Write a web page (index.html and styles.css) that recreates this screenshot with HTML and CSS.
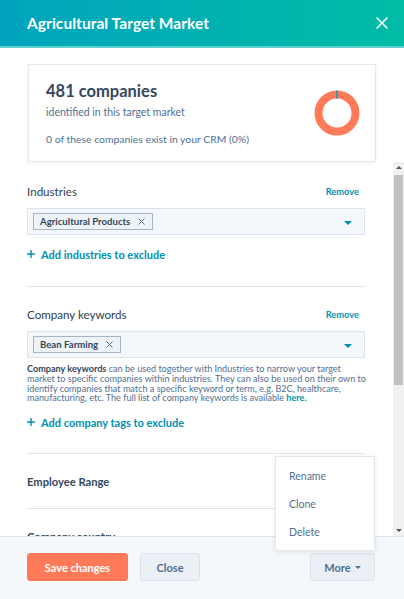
FILE: index.html
```html
<!DOCTYPE html>
<html lang="en">
<head>
<meta charset="utf-8">
<title>Agricultural Target Market</title>
<link rel="stylesheet" href="styles.css">
</head>
<body>
<div class="panel">
  <header class="header">
    <h1 class="title">Agricultural Target Market</h1>
    <button class="close-x" aria-label="Close">
      <svg width="12" height="12" viewBox="0 0 12 12"><path d="M1 1L11 11M11 1L1 11" stroke="#fff" stroke-width="1.6" stroke-linecap="round"/></svg>
    </button>
  </header>

  <div class="summary">
    <div class="card">
      <div class="card-text">
        <div class="count">481 companies</div>
        <div class="sub">identified in this target market</div>
        <div class="crm">0 of these companies exist in your CRM (0%)</div>
      </div>
      <svg class="donut" width="46" height="46" viewBox="0 0 46 46">
        <circle cx="23" cy="23" r="18.5" fill="none" stroke="#ff7a59" stroke-width="8"/>
        <rect x="22.2" y="0.5" width="1.6" height="8" fill="#00a4bd"/>
      </svg>
    </div>
  </div>

  <div class="scroll">
    <div class="scroll-inner">
      <section class="section first">
        <div class="section-head">
          <span class="label">Industries</span>
          <a class="remove">Remove</a>
        </div>
        <div class="select">
          <span class="tag">Agricultural Products <svg class="tag-x" width="7" height="7" viewBox="0 0 7 7"><path d="M0.5 0.5L6.5 6.5M6.5 0.5L0.5 6.5" stroke="#516f90" stroke-width="1"/></svg></span>
          <span class="caret"></span>
        </div>
        <a class="add-link"><span class="plus"><svg width="8" height="8" viewBox="0 0 8 8"><path d="M4 0V8M0 4H8" stroke="#0091ae" stroke-width="1.4"/></svg></span>Add industries to exclude</a>
      </section>

      <section class="section">
        <div class="section-head">
          <span class="label">Company keywords</span>
          <a class="remove">Remove</a>
        </div>
        <div class="select">
          <span class="tag">Bean Farming <svg class="tag-x" width="7" height="7" viewBox="0 0 7 7"><path d="M0.5 0.5L6.5 6.5M6.5 0.5L0.5 6.5" stroke="#516f90" stroke-width="1"/></svg></span>
          <span class="caret"></span>
        </div>
        <p class="help"><strong>Company keywords</strong> can be used together with Industries to narrow your target<br>market to specific companies within industries. They can also be used on their own to<br>identify companies that match a specific keyword or term, e.g. B2C, healthcare,<br>manufacturing, etc. The full list of company keywords is available <a class="here">here.</a></p>
        <a class="add-link"><span class="plus"><svg width="8" height="8" viewBox="0 0 8 8"><path d="M4 0V8M0 4H8" stroke="#0091ae" stroke-width="1.4"/></svg></span>Add company tags to exclude</a>
      </section>

      <div class="row">Employee Range</div>
      <div class="row">Company country</div>
    </div>
    <div class="scrollbar" aria-hidden="true">
      <div class="sb-btn"><span class="sb-up"></span></div>
      <div class="sb-track"><div class="sb-thumb"></div></div>
      <div class="sb-btn"><span class="sb-down"></span></div>
    </div>
  </div>

  <footer class="footer">
    <button class="btn btn-primary">Save changes</button>
    <button class="btn btn-secondary">Close</button>
    <button class="btn btn-secondary btn-more">More <span class="more-caret"></span></button>
  </footer>

  <div class="menu">
    <div class="menu-item">Rename</div>
    <div class="menu-item">Clone</div>
    <div class="menu-item">Delete</div>
  </div>
</div>
</body>
</html>
```

FILE: styles.css
```css
* { box-sizing: border-box; }
html, body { margin: 0; padding: 0; background: #fff; }
body { font-family: Lato, "Noto Sans", sans-serif; color: #33475b; }

.panel {
  width: 404px;
  height: 599px;
  display: flex;
  flex-direction: column;
  position: relative;
  overflow: hidden;
}

.header {
  height: 48px;
  flex: none;
  background: linear-gradient(90deg, #00a4bd 0%, #00bda5 100%);
  border-bottom: 2px solid #5fd0cc;
  display: flex;
  align-items: center;
  justify-content: space-between;
  padding: 0 16px 0 27px;
}
.title {
  margin: 0;
  font-size: 15.5px;
  font-weight: 700;
  color: #fff;
  letter-spacing: 0.05px;
}
.close-x {
  border: 0;
  background: none;
  padding: 0;
  width: 12px;
  height: 12px;
  display: flex;
}

.summary { flex: none; padding: 16px 28px 0 28px; }
.card {
  height: 98px;
  border: 1px solid #e5e9ee;
  box-shadow: 0 1px 3px rgba(45, 62, 80, 0.08);
  display: flex;
  align-items: center;
  justify-content: space-between;
  padding: 0 15px 0 17px;
}
.count { font-size: 16.5px; font-weight: 700; line-height: 22px; color: #33475b; }
.sub { font-size: 10.5px; line-height: 14px; color: #516f90; margin-top: 3px; }
.crm { font-size: 10.4px; line-height: 14px; color: #516f90; margin-top: 13px; }

.scroll {
  flex: 1;
  min-height: 0;
  display: flex;
  overflow: hidden;
}
.scroll-inner { flex: 1; min-width: 0; padding: 0 28px 0 27px; }

.scrollbar {
  flex: none;
  width: 11px;
  background: #f1f1f1;
  display: flex;
  flex-direction: column;
}
.sb-btn {
  height: 11px;
  flex: none;
  display: flex;
  align-items: center;
  justify-content: center;
}
.sb-up {
  width: 0; height: 0;
  border-left: 3px solid transparent;
  border-right: 3px solid transparent;
  border-bottom: 3px solid #555;
}
.sb-down {
  width: 0; height: 0;
  border-left: 3px solid transparent;
  border-right: 3px solid transparent;
  border-top: 3px solid #555;
}
.sb-track { flex: 1; padding: 2px 1px 0 1px; }
.sb-thumb { height: 210px; background: #c1c1c1; }

.section { border-top: 1px solid #dfe3eb; padding: 19px 0 23px; }
.section.first { border-top: 0; padding-top: 21px; padding-bottom: 24px; }
.section-head {
  display: flex;
  justify-content: space-between;
  align-items: center;
  height: 16px;
}
.label { font-size: 11.6px; font-weight: 400; color: #2d3e50; }
.remove { font-size: 9.3px; font-weight: 700; color: #0091ae; margin-right: 6px; }

.select {
  margin-top: 9px;
  height: 27px;
  border: 1px solid #dbe3ec;
  background: #f5f8fa;
  display: flex;
  align-items: center;
  justify-content: space-between;
  padding: 0 12px 0 5px;
}
.tag {
  height: 17px;
  border: 1px solid #a7b6c6;
  background: #eef3f8;
  font-size: 9.6px;
  font-weight: 700;
  color: #33475b;
  display: inline-flex;
  align-items: center;
  padding: 0 7px 0 6px;
}
.tag-x { margin-left: 8px; }
.caret {
  width: 0; height: 0;
  border-left: 4px solid transparent;
  border-right: 4px solid transparent;
  border-top: 4px solid #0091ae;
  margin-top: 2px;
}

.add-link {
  display: flex;
  align-items: center;
  margin-top: 11px;
  height: 16px;
  font-size: 11px;
  font-weight: 700;
  color: #0091ae;
}
.plus { display: flex; width: 8px; height: 8px; margin-right: 6px; }

.help {
  margin: 6px 0 0;
  font-size: 9.1px;
  line-height: 9.8px;
  color: #516f90;
  white-space: nowrap;
}
.help strong { color: #33475b; font-weight: 700; }
.here { color: #0091ae; font-weight: 700; }

.row {
  border-top: 1px solid #dfe3eb;
  height: 55px;
  display: flex;
  align-items: center;
  font-size: 11.2px;
  font-weight: 700;
  color: #33475b;
}

.footer {
  flex: none;
  height: 63px;
  border-top: 1px solid #dfe3eb;
  background: #f5f8fa;
  display: flex;
  align-items: flex-start;
  padding: 16px 29px 0 27px;
  gap: 12px;
}
.btn {
  height: 28px;
  font-family: inherit;
  font-size: 11px;
  font-weight: 700;
  border-radius: 3px;
  padding: 0;
  display: inline-flex;
  align-items: center;
  justify-content: center;
}
.btn-primary { width: 101px; background: #ff7a59; border: 1px solid #ff7a59; color: #fff; }
.btn-secondary { width: 60px; background: #eaf0f6; border: 1px solid #dbe3ec; color: #506e91; }
.btn-more { width: 65px; margin-left: auto; }
.more-caret {
  width: 0; height: 0;
  border-left: 3px solid transparent;
  border-right: 3px solid transparent;
  border-top: 3px solid #506e91;
  margin-left: 4px;
}

.menu {
  position: absolute;
  left: 275px;
  top: 456px;
  width: 100px;
  height: 95px;
  background: #fff;
  border: 1px solid #e3e8ee;
  box-shadow: 0 1px 5px rgba(45, 62, 80, 0.12);
  padding: 5px 0 5px;
}
.menu-item {
  height: 28px;
  display: flex;
  align-items: center;
  padding-left: 13px;
  font-size: 10.5px;
  color: #516f90;
}
```
